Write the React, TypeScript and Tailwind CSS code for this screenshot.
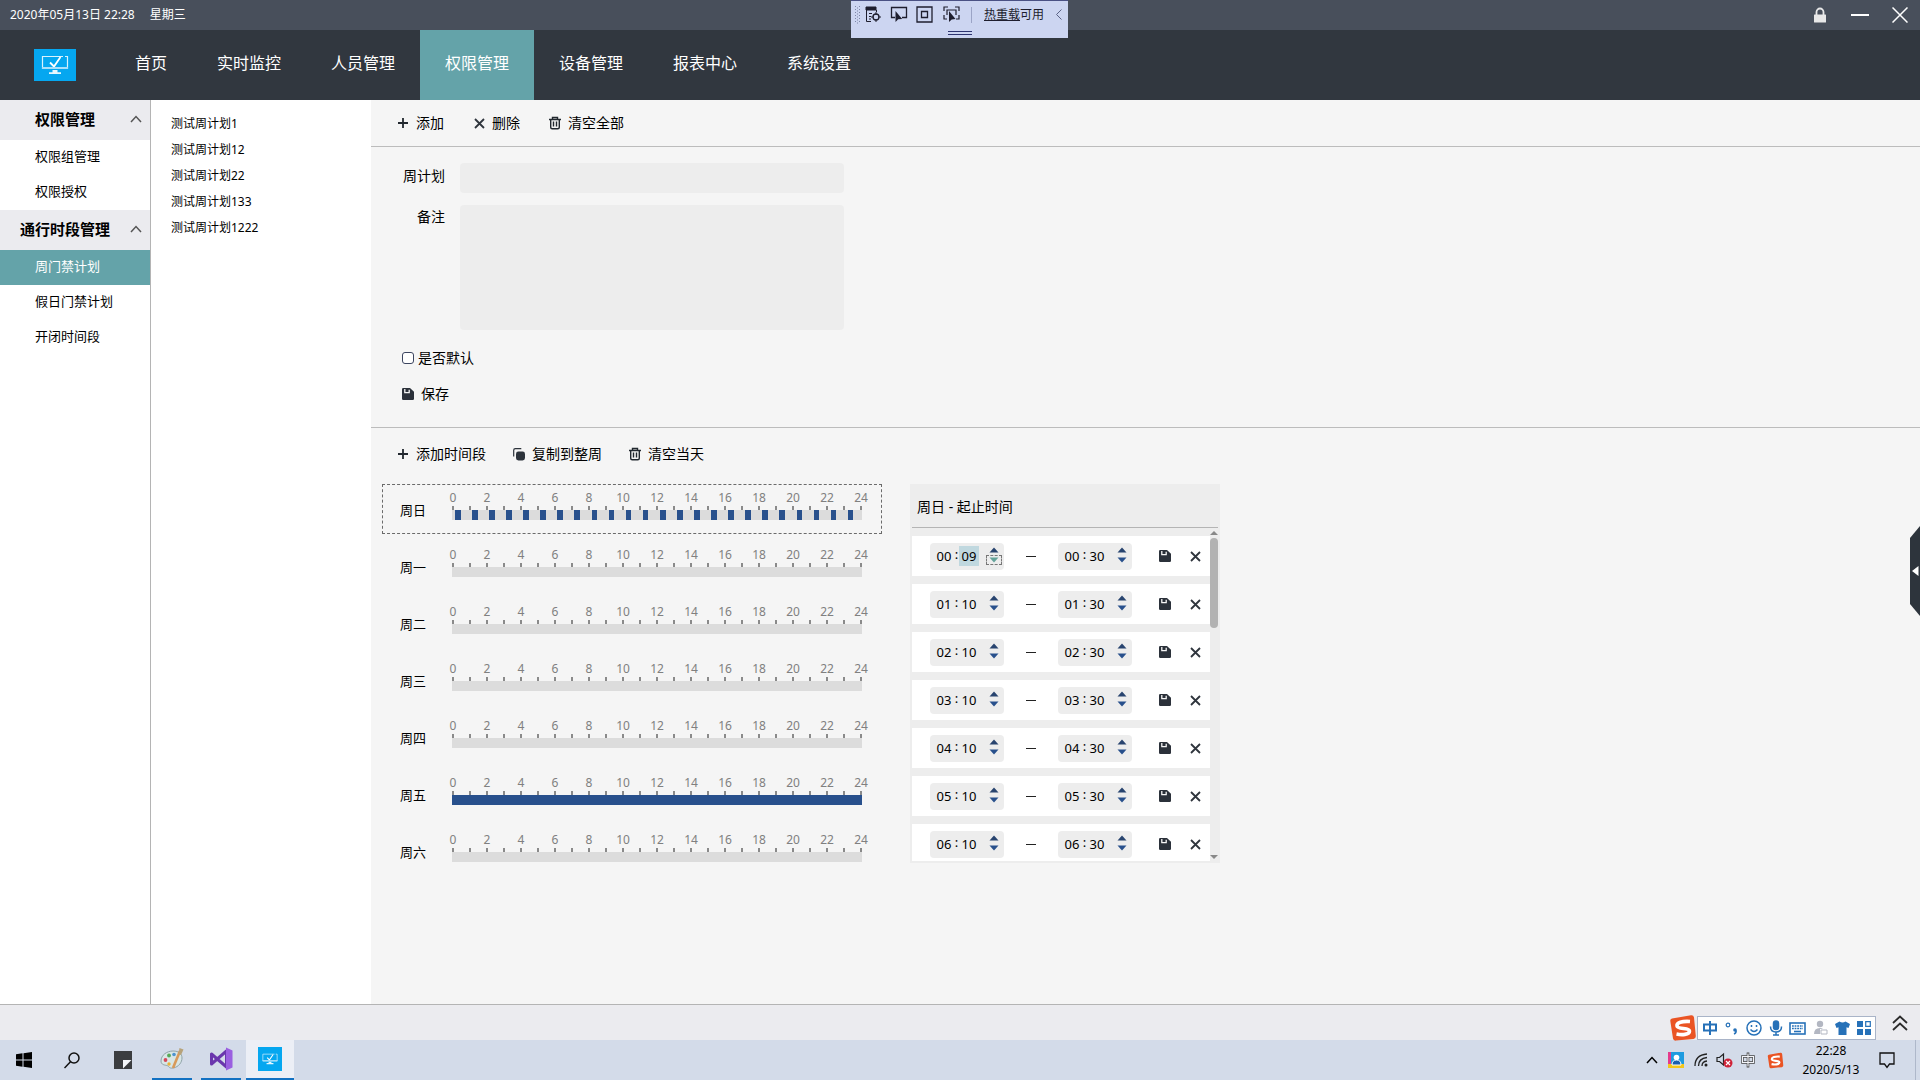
import { useState } from "react";
import type { ReactNode } from "react";

const NAV = ["首页", "实时监控", "人员管理", "权限管理", "设备管理", "报表中心", "系统设置"];

const MENU = [
    { title: "权限管理", items: ["权限组管理", "权限授权"] },
    { title: "通行时段管理", items: ["周门禁计划", "假日门禁计划", "开闭时间段"] },
];

const PLANS = ["测试周计划1", "测试周计划12", "测试周计划22", "测试周计划133", "测试周计划1222"];

type Range = { from: number; to: number };

const HOURS = Array.from({ length: 24 }, (_, i) => i);

// minutes since midnight
const WEEK: { day: string; ranges: Range[] }[] = [
    { day: "周日", ranges: HOURS.map((h) => ({ from: h * 60 + 10, to: h * 60 + 30 })) },
    { day: "周一", ranges: [] },
    { day: "周二", ranges: [] },
    { day: "周三", ranges: [] },
    { day: "周四", ranges: [] },
    { day: "周五", ranges: [{ from: 0, to: 1440 }] },
    { day: "周六", ranges: [] },
];

const SLOTS = [
    ["00", "09", "00", "30"],
    ["01", "10", "01", "30"],
    ["02", "10", "02", "30"],
    ["03", "10", "03", "30"],
    ["04", "10", "04", "30"],
    ["05", "10", "05", "30"],
    ["06", "10", "06", "30"],
];

/* ---------- icons ---------- */

function PlusIcon() {
    return (
        <svg width="14" height="14" viewBox="0 0 14 14" stroke="#22282f" strokeWidth="1.8">
            <path d="M7 2v10M2 7h10" />
        </svg>
    );
}

function CrossIcon() {
    return (
        <svg width="14" height="14" viewBox="0 0 14 14" stroke="#2f353d" strokeWidth="1.8">
            <path d="M3 3l9 9M12 3l-9 9" />
        </svg>
    );
}

function TrashIcon() {
    return (
        <svg width="14" height="14" viewBox="0 0 14 14" fill="none" stroke="#22282f" strokeWidth="1.4">
            <path d="M1 3.5h12M4.5 3.2V1.5h5v1.7M2.7 4v7.3q0 1.5 1.5 1.5h5.6q1.5 0 1.5-1.5V4M5.5 5.5v5M8.5 5.5v5" />
        </svg>
    );
}

function CopyIcon() {
    return (
        <svg width="14" height="14" viewBox="0 0 14 14" fill="none">
            <path d="M1.7 9.5V3.2q0-1.6 1.6-1.6h6" stroke="#2c333b" strokeWidth="1.2" />
            <rect x="4" y="4.5" width="9" height="9" rx="2.4" fill="#2c333b" />
        </svg>
    );
}

function SaveIcon() {
    return (
        <svg width="12" height="12" viewBox="0 0 12 12">
            <path d="M1.2 0H8l4 3.8v7q0 1.2-1.2 1.2H1.2Q0 12 0 10.8V1.2Q0 0 1.2 0z" fill="#2b313a" />
            <path d="M2.8 1v3.7h4.4V1.8" fill="none" stroke="#f5f5f5" strokeWidth="1.3" />
        </svg>
    );
}

function ChevronUp({ className = "" }: { className?: string }) {
    return (
        <svg width="12" height="8" viewBox="0 0 12 8" fill="none" stroke="currentColor" strokeWidth="1.5" className={className}>
            <path d="M1 7l5-5.5L11 7" />
        </svg>
    );
}

function MonitorIcon({ w, h }: { w: number; h: number }) {
    return (
        <svg width={w} height={h} viewBox="0 0 42 32" className="bg-[#05a7f0]" fill="none">
            <path d="M29 7.5H8.5v12h25v-12H31" stroke="#d9f2fd" strokeWidth="1.2" />
            <path d="M16 13.5l4 4L26.5 8" stroke="#fff" strokeWidth="1.8" />
            <path d="M8 18h26v2H8z" fill="#a8e0fa" />
            <path d="M18.5 21h5v2.2H27V25H15v-1.8h3.5z" fill="#e6f7fe" />
        </svg>
    );
}

function SogouIcon({ size }: { size: number }) {
    return (
        <svg width={size} height={size} viewBox="0 0 28 28">
            <path d="M3 4.5Q1 5 1.3 7L4 24.5Q4.5 27 7 26.6L24.5 25Q27 24.5 26.8 22L25 3.5Q24.6 1 22 1.3z" fill="#ea5424" />
            <path
                d="M21 7.5C13 7 7.5 8.5 8 12c.5 3.5 12.5 1.500 12.500 5 0 4-8 4-13 3"
                fill="none"
                stroke="#fff"
                strokeWidth="3.6"
            />
        </svg>
    );
}

/* ---------- header ---------- */

function DebugToolbar() {
    return (
        <div className="absolute left-1/2 top-0 -ml-[109px] h-[38px] w-[217px] border-t border-[#4a5184] bg-[#ccd5f1] text-[#1e1e2e]">
            <div className="flex h-[27px] items-center pl-1">
                <svg width="6" height="18" viewBox="0 0 6 18" fill="#7d86a8">
                    {[0, 3, 6, 9, 12, 15].map((y) => (
                        <path key={y} d={`M0 ${y}h1v1H0zM4 ${y}h1v1H4zM2 ${y + 1.5}h1v1H2z`} />
                    ))}
                </svg>
                <button className="ml-1" aria-label="实时可视化树">
                    <svg width="17" height="17" viewBox="0 0 17 17" fill="none" stroke="#1e1e2e">
                        <path d="M1 1h10v3H1z" fill="#1e1e2e" />
                        <path d="M1.5 4v11.5H6M4 7.5h3M4 10.5h2M4 13h2M11.5 4v2" />
                        <circle cx="11" cy="11" r="3" strokeWidth="1.3" />
                        <path d="M11 6v3M11 13v3M6 11h3M13 11h3" />
                    </svg>
                </button>
                <button className="pl-2" aria-label="选择元素">
                    <svg width="18" height="17" viewBox="0 0 18 17" fill="none" stroke="#1e1e2e" strokeWidth="1.3">
                        <path d="M5 11.5H1.5v-10h15v10H12" />
                        <path d="M5.5 5v11l2.7-2.7 4-.3z" fill="#1e1e2e" stroke="none" />
                    </svg>
                </button>
                <button className="pl-2" aria-label="显示布局装饰器">
                    <svg width="17" height="17" viewBox="0 0 17 17" fill="none" stroke="#1e1e2e" strokeWidth="1.3">
                        <path d="M1 1h15v15H1zM5.5 5.5h6v6h-6z" />
                    </svg>
                </button>
                <button className="ml-2.5" aria-label="跟踪具有焦点的元素">
                    <svg width="18" height="17" viewBox="0 0 18 17" fill="none" stroke="#1e1e2e" strokeWidth="1.2">
                        <path d="M1 5V1h4M12 1h4v4M1 9v4h3M16 9v4h-3M4 9V4h9v5" />
                        <path d="M6 5v11l2.7-2.5 3.8-.5z" fill="#1e1e2e" stroke="none" />
                    </svg>
                </button>
                <span className="ml-2.5 h-4 w-px bg-[#9ba4c6]" />
                <button className="ml-3 text-xs leading-4">
                    <u>热重载</u>可用
                </button>
                <svg width="6" height="11" viewBox="0 0 6 11" fill="none" stroke="#5a6285" className="ml-3">
                    <path d="M5.5 0.5l-5 5 5 5" />
                </svg>
            </div>
            <div className="mx-auto mt-[3px] h-1 w-6 border-y border-[#2d3470]" />
        </div>
    );
}

function TitleBar() {
    return (
        <div className="relative flex h-[30px] items-center justify-between bg-[#484f5b] pl-2.5 pr-3 text-xs text-white">
            <div className="flex gap-[15px]">
                <span>2020年05月13日 22:28</span>
                <span>星期三</span>
            </div>
            <DebugToolbar />
            <div className="flex items-center">
                <button aria-label="锁定" className="mr-6">
                    <svg width="14" height="16" viewBox="0 0 14 16">
                        <path d="M3.5 8V5a3.5 3.5 0 0 1 7 0v3" fill="none" stroke="#e8e8e8" strokeWidth="1.8" />
                        <rect x="1" y="7.5" width="12" height="8" rx="0.5" fill="#e8e8e8" />
                    </svg>
                </button>
                <button aria-label="最小化" className="mr-[23px] h-5 w-[18px]">
                    <span className="block h-0.5 bg-white" />
                </button>
                <button aria-label="关闭">
                    <svg width="16" height="16" viewBox="0 0 16 16" stroke="#fff" strokeWidth="1.5">
                        <path d="M0.5 0.5l15 15M15.5 0.5l-15 15" />
                    </svg>
                </button>
            </div>
        </div>
    );
}

function NavBar() {
    const [active, setActive] = useState("权限管理");
    return (
        <nav className="flex h-[70px] items-center bg-[#31373f] pl-[34px] text-white">
            <MonitorIcon w={42} h={32} />
            <div className="ml-[34px] flex h-full">
                {NAV.map((n) => (
                    <button
                        key={n}
                        onClick={() => setActive(n)}
                        className={`px-[25px] pb-1 text-base ${n === active ? "bg-[#64a3a9]" : ""}`}
                    >
                        {n}
                    </button>
                ))}
            </div>
        </nav>
    );
}

function SideMenu() {
    const [current, setCurrent] = useState("周门禁计划");
    return (
        <aside className="w-[151px] shrink-0 border-r border-[#b4b4b4] bg-white text-[13px] text-black">
            {MENU.map((g) => (
                <section key={g.title}>
                    <button className="flex h-10 w-full items-center bg-[#ebebef] pb-0.5 text-[15px] font-bold">
                        <span className="w-[130px] text-center">{g.title}</span>
                        <ChevronUp className="text-[#555]" />
                    </button>
                    {g.items.map((it) => (
                        <button
                            key={it}
                            onClick={() => setCurrent(it)}
                            className={`block h-[35px] w-full pb-0.5 pl-[35px] text-left ${
                                it === current ? "bg-[#64a3a9] text-white" : ""
                            }`}
                        >
                            {it}
                        </button>
                    ))}
                </section>
            ))}
        </aside>
    );
}

/* ---------- plan form ---------- */

function ToolButton({ icon, children }: { icon: ReactNode; children: ReactNode }) {
    return (
        <button className="flex items-center gap-1.5 text-sm">
            {icon}
            <span>{children}</span>
        </button>
    );
}

function PlanForm() {
    const [name, setName] = useState("");
    const [remark, setRemark] = useState("");
    return (
        <form className="border-b border-[#bcbcbc] pb-[23px] pl-[31px] pt-4 text-sm" onSubmit={(e) => e.preventDefault()}>
            <div className="flex items-center">
                <label htmlFor="plan" className="w-[43px] pb-1 text-right">周计划</label>
                <input
                    id="plan"
                    className="ml-[15px] h-[30px] w-96 rounded-sm bg-[#ededed] px-2 outline-none"
                    value={name}
                    onChange={(e) => setName(e.target.value)}
                />
            </div>
            <div className="mt-3 flex items-start">
                <label htmlFor="remark" className="w-[43px] pt-0.5 text-right">备注</label>
                <textarea
                    id="remark"
                    className="ml-[15px] h-[125px] w-96 resize-none rounded-sm bg-[#ededed] p-2 outline-none"
                    value={remark}
                    onChange={(e) => setRemark(e.target.value)}
                />
            </div>
            <label className="mt-[18px] flex h-5 items-center gap-1">
                <input
                    type="checkbox"
                    className="h-3 w-3 appearance-none rounded-[3px] border border-[#3c4560] bg-white checked:bg-[#26508d]"
                />
                <span>是否默认</span>
            </label>
            <button className="mt-4 flex h-5 items-center gap-[7px]">
                <SaveIcon />
                保存
            </button>
        </form>
    );
}

/* ---------- week timeline ---------- */

function DayRow({ day, ranges, selected, onSelect }: { day: string; ranges: Range[]; selected: boolean; onSelect: () => void }) {
    return (
        <div
            onClick={onSelect}
            className={`flex h-[50px] items-start border border-dashed pl-[17px] ${
                selected ? "border-[#6b6b6b]" : "border-transparent"
            }`}
        >
            <span className="mt-[15px] w-[52px] text-[13px] leading-5">{day}</span>
            <div className="w-[410px]">
                <div className="flex justify-between text-xs leading-4 text-[#808080]">
                    {HOURS.filter((h) => h % 2 === 0).concat(24).map((h) => (
                        <span key={h} className="flex w-[2px] justify-center pt-[5px]">{h}</span>
                    ))}
                </div>
                <div className="flex h-1 justify-between">
                    {HOURS.concat(24).map((h) => (
                        <span key={h} className="w-0.5 bg-[#8a8a8a]" />
                    ))}
                </div>
                <div className="relative h-2.5 bg-[#dcdcdc]">
                    {ranges.map((r) => (
                        <span
                            key={r.from}
                            className="absolute inset-y-0 bg-[#28508c]"
                            style={{ left: `${(r.from / 1440) * 100}%`, width: `${((r.to - r.from) / 1440) * 100}%` }}
                        />
                    ))}
                </div>
            </div>
        </div>
    );
}

function TimeBox({ h, m, label, editing }: { h: string; m: string; label: string; editing?: boolean }) {
    return (
        <div className="flex h-[27px] w-[74px] items-center rounded bg-[#ededed] pl-1 text-[13px] leading-5">
            <input aria-label={`${label}小时`} defaultValue={h} className="h-5 w-5 text-center outline-none" />
            <span className="w-[5px] pb-1 text-center">:</span>
            <input
                aria-label={`${label}分钟`}
                defaultValue={m}
                className={`h-5 w-5 text-center outline-none ${editing ? "bg-[#c0d8df]" : ""}`}
            />
            <div className="ml-[7px] flex w-4 flex-col items-center">
                <button aria-label={`${label}增加`} className="flex h-2 w-4 justify-center">
                    <svg width="10" height="6" viewBox="0 0 10 6" fill="#28446f">
                        <path d="M5 0.500l4.500 5h-9z" />
                    </svg>
                </button>
                <button
                    aria-label={`${label}减少`}
                    className={`flex h-2.5 w-4 items-center justify-center border border-dashed ${
                        editing ? "border-[#777]" : "border-transparent"
                    }`}
                >
                    <svg width="10" height="6" viewBox="0 0 10 6" fill={editing ? "#64a39a" : "#28508c"}>
                        <path d="M0.500 0.500h9L5 5.500z" />
                    </svg>
                </button>
            </div>
        </div>
    );
}

function SlotPanel({ day }: { day: string }) {
    return (
        <section className="w-[310px] bg-[#ededed] p-0.5">
            <h2 className="h-[42px] border-b border-[#b4b4b4] pl-[5px] pt-[11px] text-sm leading-5">{day} - 起止时间</h2>
            <div className="flex h-[333px]">
                <ul className="flex-1 space-y-2 overflow-hidden pt-2">
                    {SLOTS.map(([h1, m1, h2, m2], i) => (
                        <li key={h1} className="flex h-10 items-center bg-white pl-[18px]">
                            <TimeBox h={h1} m={m1} label="开始" editing={i === 0} />
                            <span className="mx-[22px] h-px w-2.5 bg-[#222]" />
                            <TimeBox h={h2} m={m2} label="结束" />
                            <button aria-label="保存" className="ml-[27px]">
                                <SaveIcon />
                            </button>
                            <button aria-label="删除" className="ml-[17px]">
                                <CrossIcon />
                            </button>
                        </li>
                    ))}
                </ul>
                <div className="flex w-2 flex-col items-center pb-0.5 pt-[3px]">
                    <svg width="8" height="4" viewBox="0 0 8 4" fill="#888">
                        <path d="M4 0l4 4H0z" />
                    </svg>
                    <div className="mt-[3px] h-[90px] w-2 rounded-sm bg-[#b2b2b2]" />
                    <svg width="8" height="4" viewBox="0 0 8 4" fill="#888" className="mt-auto">
                        <path d="M0 0h8L4 4z" />
                    </svg>
                </div>
            </div>
        </section>
    );
}

/* ---------- bottom ---------- */

function ImeBar() {
    return (
        <div className="absolute -bottom-0.5 right-11 flex items-end text-[#2671b8]">
            <SogouIcon size={28} />
            <div className="mb-0.5 flex h-6 w-[179px] items-center justify-between border border-[#a9b4c8] bg-white px-1">
                <svg width="16" height="16" viewBox="0 0 16 16" fill="none" stroke="currentColor" strokeWidth="2">
                    <path d="M2 4.5h12v6H2zM8 1v14" />
                </svg>
                <svg width="14" height="14" viewBox="0 0 14 14" fill="none" stroke="currentColor">
                    <circle cx="3" cy="4" r="1.8" strokeWidth="1.2" />
                    <circle cx="10" cy="9" r="1.8" fill="currentColor" stroke="none" />
                    <path d="M11 9.5q.5 2.5-2 3.5" strokeWidth="1.6" />
                </svg>
                <svg width="16" height="16" viewBox="0 0 16 16" fill="none" stroke="currentColor" strokeWidth="1.5">
                    <circle cx="8" cy="8" r="7" />
                    <path d="M4.5 9.5q3.5 4 7 0M5.5 5v2M10.5 5v2" />
                </svg>
                <svg width="14" height="16" viewBox="0 0 14 16" fill="none" stroke="currentColor" strokeWidth="1.5">
                    <rect x="4.5" y="1" width="5" height="8.5" rx="2.5" fill="currentColor" />
                    <path d="M1.5 6.5q0 5.5 5.5 5.5t5.5-5.5M7 12v3M4 15h6" />
                </svg>
                <svg width="17" height="13" viewBox="0 0 17 13" fill="none" stroke="currentColor" strokeWidth="1.6">
                    <rect x="1" y="1" width="15" height="11" />
                    <path d="M3 4h11M3 6.5h11" strokeDasharray="1.8 0.8" />
                    <path d="M5 9.5h7" />
                </svg>
                <svg width="15" height="16" viewBox="0 0 15 16" fill="#b3b7c2">
                    <circle cx="7" cy="4" r="3.2" />
                    <path d="M1 14q0-6 6-6 2 0 3 1H7v5z" />
                    <path d="M8 10h6v4H8z" fill="none" stroke="#b3b7c2" />
                </svg>
                <svg width="15" height="14" viewBox="0 0 15 14" fill="currentColor">
                    <path d="M4.5 0.5q3 2 6 0L15 3l-1.5 4-2-.7V14h-8V6.3l-2 .7L0 3z" />
                </svg>
                <svg width="14" height="14" viewBox="0 0 14 14" fill="currentColor">
                    <path d="M0 0h6v6H0zM0 8h6v6H0zM8 8h6v6H8z" />
                    <path d="M8.7 0.7h4.6v4.6H8.7z" fill="none" stroke="currentColor" strokeWidth="1.2" />
                </svg>
            </div>
        </div>
    );
}

function StatusBar() {
    return (
        <footer className="relative z-10 flex h-9 items-center justify-end border-t border-[#b4b4b4] bg-[#ebebef] pr-3">
            <ImeBar />
            <button aria-label="展开">
                <svg width="16" height="16" viewBox="0 0 16 16" fill="none" stroke="#2b2b2b" strokeWidth="1.8">
                    <path d="M1 8l7-6.5L15 8M1 15l7-6.5 7 6.5" />
                </svg>
            </button>
        </footer>
    );
}

function Taskbar() {
    return (
        <div className="flex h-10 items-stretch justify-between bg-[#d3dbe9] text-black">
            <div className="flex">
                <button aria-label="开始" className="flex w-12 items-center justify-center">
                    <svg width="16" height="16" viewBox="0 0 16 16" fill="#000">
                        <path d="M0 2.2l6.5-.9v6.2H0zM7.5 1.2L16 0v7.5H7.5zM0 8.5h6.5v6.2L0 13.8zM7.5 8.5H16V16l-8.5-1.2z" />
                    </svg>
                </button>
                <button aria-label="搜索" className="flex w-12 items-center justify-center">
                    <svg width="16" height="17" viewBox="0 0 16 17" fill="none" stroke="#111" strokeWidth="1.5">
                        <circle cx="10" cy="6" r="5" />
                        <path d="M6.5 9.8L0.5 16" />
                    </svg>
                </button>
                <button aria-label="便笺" className="ml-0.5 flex w-[50px] items-center justify-center">
                    <svg width="18" height="18" viewBox="0 0 18 18">
                        <path d="M0 0h18v18H0z" fill="#3b3d40" />
                        <path d="M9 9h8.500L9 17.500z" fill="#f4f6fa" />
                    </svg>
                </button>
                <button aria-label="画图" className="ml-1 flex w-10 items-center justify-center border-b-2 border-[#1271c2]">
                    <svg width="24" height="24" viewBox="0 0 24 24">
                        <path d="M1 14C1 8 7 4 13 4s9 3 9 7-3 9-9 10c-4 .8-4-2-6-2.5S1 18 1 14z" fill="#d8e6e6" stroke="#8fa3a8" />
                        <circle cx="5.5" cy="13" r="1.9" fill="#d6485a" />
                        <circle cx="9" cy="8.5" r="1.9" fill="#58a858" />
                        <circle cx="14" cy="7.5" r="1.8" fill="#4e93cf" />
                        <circle cx="9" cy="17" r="1.7" fill="#e8b23a" />
                        <path d="M13 21L20 4" stroke="#d89a5a" strokeWidth="2.6" />
                        <path d="M18.5 7l1-6 4 1.5L21 8z" fill="#b7a37a" />
                    </svg>
                </button>
                <button aria-label="Visual Studio" className="ml-[9px] flex w-10 items-center justify-center border-b-2 border-[#1271c2]">
                    <svg width="24" height="24" viewBox="0 0 24 24" fill="none">
                        <path d="M2.5 7v10l15-13v16z" stroke="#6a36ad" strokeWidth="3" strokeLinejoin="round" />
                        <path d="M17 0.5l6.5 3v17l-6.5 3z" fill="#9a5fe0" />
                    </svg>
                </button>
                <button
                    aria-label="门禁管理"
                    className="ml-[5px] flex w-12 items-center justify-center border-b-2 border-[#1271c2] bg-[#eceff6]"
                >
                    <span className="flex h-6 w-6 items-center overflow-hidden bg-[#05a7f0]">
                        <MonitorIcon w={24} h={20} />
                    </span>
                </button>
            </div>
            <div className="flex items-center">
                <ChevronUp />
                <svg width="16" height="16" viewBox="0 0 16 16" className="ml-2.5">
                    <path d="M0 0h16v16H0z" fill="#1e9be0" />
                    <path d="M0 0h3v12H0z" fill="#e53a8c" />
                    <path d="M0 12h16v4H0z" fill="#f3c61c" />
                    <circle cx="8.5" cy="5.5" r="2.8" fill="#fff" />
                    <path d="M4 13q0-5 4.5-5t4.5 5z" fill="#1b5fae" stroke="#fff" />
                </svg>
                <svg width="14" height="14" viewBox="0 0 14 14" fill="none" stroke="#222" strokeWidth="1.3" className="ml-2.5">
                    <path d="M1 13Q1 2 13 1M4.5 13Q4.5 5.5 13 4.5M8 13Q8 8.5 13 8" />
                    <circle cx="12" cy="12" r="1.5" fill="#222" stroke="none" />
                </svg>
                <svg width="17" height="16" viewBox="0 0 17 16" fill="none" className="ml-2">
                    <path d="M1 5.5h2.5L7.5 2v11L3.5 9.5H1z" stroke="#222" strokeWidth="1.2" />
                    <circle cx="12" cy="11" r="4.5" fill="#cf2338" />
                    <path d="M10 9l4 4M14 9l-4 4" stroke="#fff" strokeWidth="1.2" />
                </svg>
                <svg width="14" height="16" viewBox="0 0 14 16" fill="none" className="ml-2">
                    <path d="M1.5 4.5h11v6h-11zM7 0.5v15" stroke="#444" strokeWidth="2.6" />
                    <path d="M1.5 4.5h11v6h-11zM7 1.5v13" stroke="#f3f5fa" strokeWidth="1.2" />
                </svg>
                <span className="ml-3">
                    <SogouIcon size={17} />
                </span>
                <div className="ml-3 w-[70px] text-center text-xs leading-[19px]">
                    <div>22:28</div>
                    <div>2020/5/13</div>
                </div>
                <button aria-label="通知" className="ml-[13px] mr-5">
                    <svg width="16" height="17" viewBox="0 0 16 17" fill="none" stroke="#111" strokeWidth="1.3">
                        <path d="M1 1h14v11h-4.5L8 15.5 5.5 12H1z" />
                    </svg>
                </button>
                <span className="mr-1 h-10 w-px bg-[#aeb8ca]" />
            </div>
        </div>
    );
}

export default function App() {
    const [day, setDay] = useState("周日");

    return (
        <div className="relative flex min-h-screen flex-col bg-[#f5f5f5] font-['Noto_Sans','Noto_Sans_CJK_SC',sans-serif] text-black">
            <TitleBar />
            <NavBar />
            <div className="flex flex-1">
                <SideMenu />
                <ul className="w-[220px] shrink-0 bg-white pl-5 pt-[11px] text-xs leading-[26px]">
                    {PLANS.map((p) => (
                        <li key={p}>{p}</li>
                    ))}
                </ul>
                <main className="min-w-0 flex-1">
                    <div className="flex h-[47px] items-center gap-7 border-b border-[#bcbcbc] pl-[25px]">
                        <ToolButton icon={<PlusIcon />}>添加</ToolButton>
                        <ToolButton icon={<CrossIcon />}>删除</ToolButton>
                        <ToolButton icon={<TrashIcon />}>清空全部</ToolButton>
                    </div>
                    <PlanForm />
                    <div className="flex h-[52px] items-center gap-[26px] pl-[25px]">
                        <ToolButton icon={<PlusIcon />}>添加时间段</ToolButton>
                        <ToolButton icon={<CopyIcon />}>复制到整周</ToolButton>
                        <ToolButton icon={<TrashIcon />}>清空当天</ToolButton>
                    </div>
                    <div className="mt-1 flex items-start gap-7 pl-[11px]">
                        <div className="w-[500px] space-y-[7px]">
                            {WEEK.map((w) => (
                                <DayRow key={w.day} {...w} selected={w.day === day} onSelect={() => setDay(w.day)} />
                            ))}
                        </div>
                        <SlotPanel day={day} />
                    </div>
                </main>
            </div>
            <button aria-label="展开侧栏" className="absolute right-0 top-[526px]">
                <svg width="10" height="90" viewBox="0 0 10 90">
                    <path d="M10 0v90L0 78V12z" fill="#2d343c" />
                    <path d="M8.5 40v10L2 45z" fill="#fff" />
                </svg>
            </button>
            <StatusBar />
            <Taskbar />
        </div>
    );
}
